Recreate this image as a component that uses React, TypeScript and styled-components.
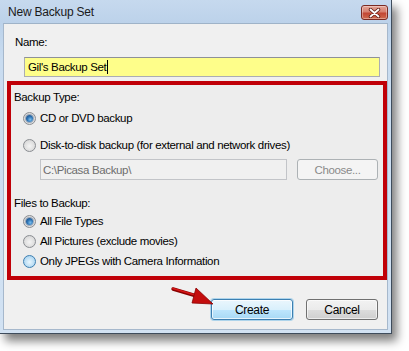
import React from 'react';
import styled, { createGlobalStyle } from 'styled-components';

const GlobalStyle = createGlobalStyle`
  body {
    margin: 0;
    background: #ffffff;
  }
`;

const FONT = `'Liberation Sans', Arial, sans-serif`;

const Page = styled.div`
  width: 409px;
  height: 351px;
  background: #ffffff;
  position: relative;
  font-family: ${FONT};
  font-size: 11.5px;
  letter-spacing: -0.35px;
  color: #000000;
`;

const Window = styled.div`
  position: relative;
  width: 392px;
  height: 334px;
  box-sizing: border-box;
  display: flex;
  flex-direction: column;
  background: linear-gradient(180deg, #c6d9ee 0px, #bcd2ea 23px, #c9dcf0 60px, #d2e2f3 334px);
  border-right: 1px solid #3e4c5c;
  border-bottom: 1px solid #3e4c5c;
  box-shadow: 5px 7px 9px rgba(0, 0, 0, 0.5);
`;

const TitleBar = styled.div`
  height: 23px;
  display: flex;
  justify-content: space-between;
  align-items: flex-start;
  padding: 0 3px 0 8px;
`;

const Title = styled.span`
  margin-top: 5px;
  font-size: 12px;
  letter-spacing: -0.2px;
  color: #1a1a1a;
`;

const CloseButton = styled.div`
  margin-top: 5px;
  width: 27px;
  height: 15px;
  box-sizing: border-box;
  border: 1px solid #7a2a22;
  border-radius: 3px;
  background: linear-gradient(180deg, #e4a597 0%, #d6806f 45%, #c24633 55%, #cf6a4e 100%);
  display: flex;
  align-items: center;
  justify-content: center;
  box-shadow: inset 0 0 0 1px rgba(255, 255, 255, 0.35);
`;

const Body = styled.div`
  flex: 1;
  margin: 0 3px 3px 3px;
  background: #f0f0f0;
  border: 1px solid #a6b8cc;
  border-top-color: #9fb3c8;
  padding: 11px 0 0 3px;
  display: flex;
  flex-direction: column;
`;

const FieldLabel = styled.div<{ $indent: number; $top?: number }>`
  line-height: 15px;
  margin-left: ${(p) => p.$indent}px;
  margin-top: ${(p) => p.$top ?? 0}px;
`;

const NameInput = styled.div`
  margin: 7px 7px 0 17px;
  height: 20px;
  box-sizing: border-box;
  border: 1px solid #abadb3;
  border-top-color: #8e9197;
  background: #fefe8a;
  padding-left: 3px;
  display: flex;
  align-items: center;
`;

const Caret = styled.span`
  display: inline-block;
  width: 1px;
  height: 14px;
  background: #000000;
  margin-left: 1px;
`;

const Highlight = styled.div`
  margin: 4px 0 0 0;
  height: 199px;
  box-sizing: border-box;
  border: 4px solid #c00008;
  padding: 5px 0 0 3px;
  display: flex;
  flex-direction: column;
  background: #ededed;
`;

const RadioRow = styled.div<{ $top: number }>`
  display: flex;
  align-items: center;
  gap: 4px;
  height: 18px;
  margin: ${(p) => p.$top}px 0 0 9px;
`;

const RadioCircle = styled.span<{ $checked?: boolean; $hover?: boolean }>`
  width: 13px;
  height: 13px;
  box-sizing: border-box;
  border-radius: 50%;
  border: 1px solid ${(p) => (p.$hover ? '#3c7fb1' : '#8a8d92')};
  background: ${(p) =>
    p.$hover
      ? 'radial-gradient(circle at 50% 55%, #e9f6fd 0%, #b8dcf4 60%, #9cc9ea 100%)'
      : 'radial-gradient(circle at 50% 55%, #f4f4f4 0%, #dcdcdc 65%, #c9c9c9 100%)'};
  display: flex;
  align-items: center;
  justify-content: center;
  flex-shrink: 0;

  &::after {
    content: '';
    display: ${(p) => (p.$checked ? 'block' : 'none')};
    width: 7px;
    height: 7px;
    border-radius: 50%;
    background: radial-gradient(circle at 60% 65%, #7cc0ee 0%, #2e74b5 45%, #0f3e73 100%);
    box-shadow: 0 0 0 1px rgba(24, 60, 110, 0.35);
  }
`;

const PathRow = styled.div`
  display: flex;
  gap: 10px;
  margin: 5px 0 0 26px;
  height: 21px;
`;

const PathInput = styled.div`
  width: 247px;
  box-sizing: border-box;
  border: 1px solid #c2c4c8;
  background: #f0f0f0;
  color: #6d6d6d;
  padding-left: 2px;
  display: flex;
  align-items: center;
`;

const ChooseButton = styled.div`
  width: 81px;
  box-sizing: border-box;
  border: 1px solid #adb2b5;
  border-radius: 3px;
  background: #f4f4f4;
  color: #8a8a8a;
  display: flex;
  align-items: center;
  justify-content: center;
`;

const ButtonRow = styled.div`
  display: flex;
  justify-content: flex-end;
  gap: 13px;
  margin: 19px 9px 0 0;
`;

const DialogButton = styled.div<{ $primary?: boolean; $width: number }>`
  width: ${(p) => p.$width}px;
  height: 21px;
  box-sizing: border-box;
  border-radius: 3px;
  border: 1px solid ${(p) => (p.$primary ? '#3c7fb1' : '#707070')};
  background: ${(p) =>
    p.$primary
      ? 'linear-gradient(180deg, #eaf6fd 0%, #d9f0fc 50%, #bee6fd 51%, #a7d9f5 100%)'
      : 'linear-gradient(180deg, #f2f2f2 0%, #ebebeb 50%, #dddddd 51%, #cfcfcf 100%)'};
  box-shadow: ${(p) =>
    p.$primary
      ? '0 0 0 1px rgba(94, 177, 228, 0.45), inset 0 0 0 1px rgba(255,255,255,0.7)'
      : 'inset 0 0 0 1px rgba(255,255,255,0.6)'};
  display: flex;
  align-items: center;
  justify-content: center;
  font-size: 12px;
`;

const Arrow = styled.svg`
  position: absolute;
  left: 170px;
  top: 284px;
`;

const options = {
  type: [
    { label: 'CD or DVD backup', checked: true, top: 4 },
    { label: 'Disk-to-disk backup (for external and network drives)', checked: false, top: 9 },
  ],
  files: [
    { label: 'All File Types', checked: true, hover: false, top: 1 },
    { label: 'All Pictures (exclude movies)', checked: false, hover: false, top: 2 },
    { label: 'Only JPEGs with Camera Information', checked: false, hover: true, top: 2 },
  ],
};

const App: React.FC = () => {
  return (
    <Page>
      <GlobalStyle />
      <Window>
        <TitleBar>
          <Title>New Backup Set</Title>
          <CloseButton>
            <svg width="13" height="10" viewBox="0 0 13 10">
              <path d="M2.5 1.5 L10.5 8.5 M10.5 1.5 L2.5 8.5" stroke="#5a1810" strokeWidth="3.4" strokeLinecap="round" />
              <path d="M2.5 1.5 L10.5 8.5 M10.5 1.5 L2.5 8.5" stroke="#ffffff" strokeWidth="1.8" strokeLinecap="round" />
            </svg>
          </CloseButton>
        </TitleBar>
        <Body>
          <FieldLabel $indent={8}>Name:</FieldLabel>
          <NameInput>
            Gil's Backup Set
            <Caret />
          </NameInput>
          <Highlight>
            <FieldLabel $indent={0}>Backup Type:</FieldLabel>
            {options.type.map((o) => (
              <RadioRow key={o.label} $top={o.top}>
                <RadioCircle $checked={o.checked} />
                <span>{o.label}</span>
              </RadioRow>
            ))}
            <PathRow>
              <PathInput>C:\Picasa Backup\</PathInput>
              <ChooseButton>Choose...</ChooseButton>
            </PathRow>
            <FieldLabel $indent={0} $top={16}>
              Files to Backup:
            </FieldLabel>
            {options.files.map((o) => (
              <RadioRow key={o.label} $top={o.top}>
                <RadioCircle $checked={o.checked} $hover={o.hover} />
                <span>{o.label}</span>
              </RadioRow>
            ))}
          </Highlight>
          <ButtonRow>
            <DialogButton $primary $width={82}>
              Create
            </DialogButton>
            <DialogButton $width={72}>Cancel</DialogButton>
          </ButtonRow>
        </Body>
        <Arrow width="46" height="26" viewBox="0 0 46 26">
          <path d="M3 5 L30 13" stroke="#8a0000" strokeWidth="3.4" strokeLinecap="round" />
          <path d="M3 4.5 L30 12.5" stroke="#d81818" strokeWidth="1.6" strokeLinecap="round" />
          <path d="M26 4 L43 20 L22 19 Z" fill="#c40d0d" stroke="#8a0000" strokeWidth="0.8" />
        </Arrow>
      </Window>
    </Page>
  );
};

export default App;
